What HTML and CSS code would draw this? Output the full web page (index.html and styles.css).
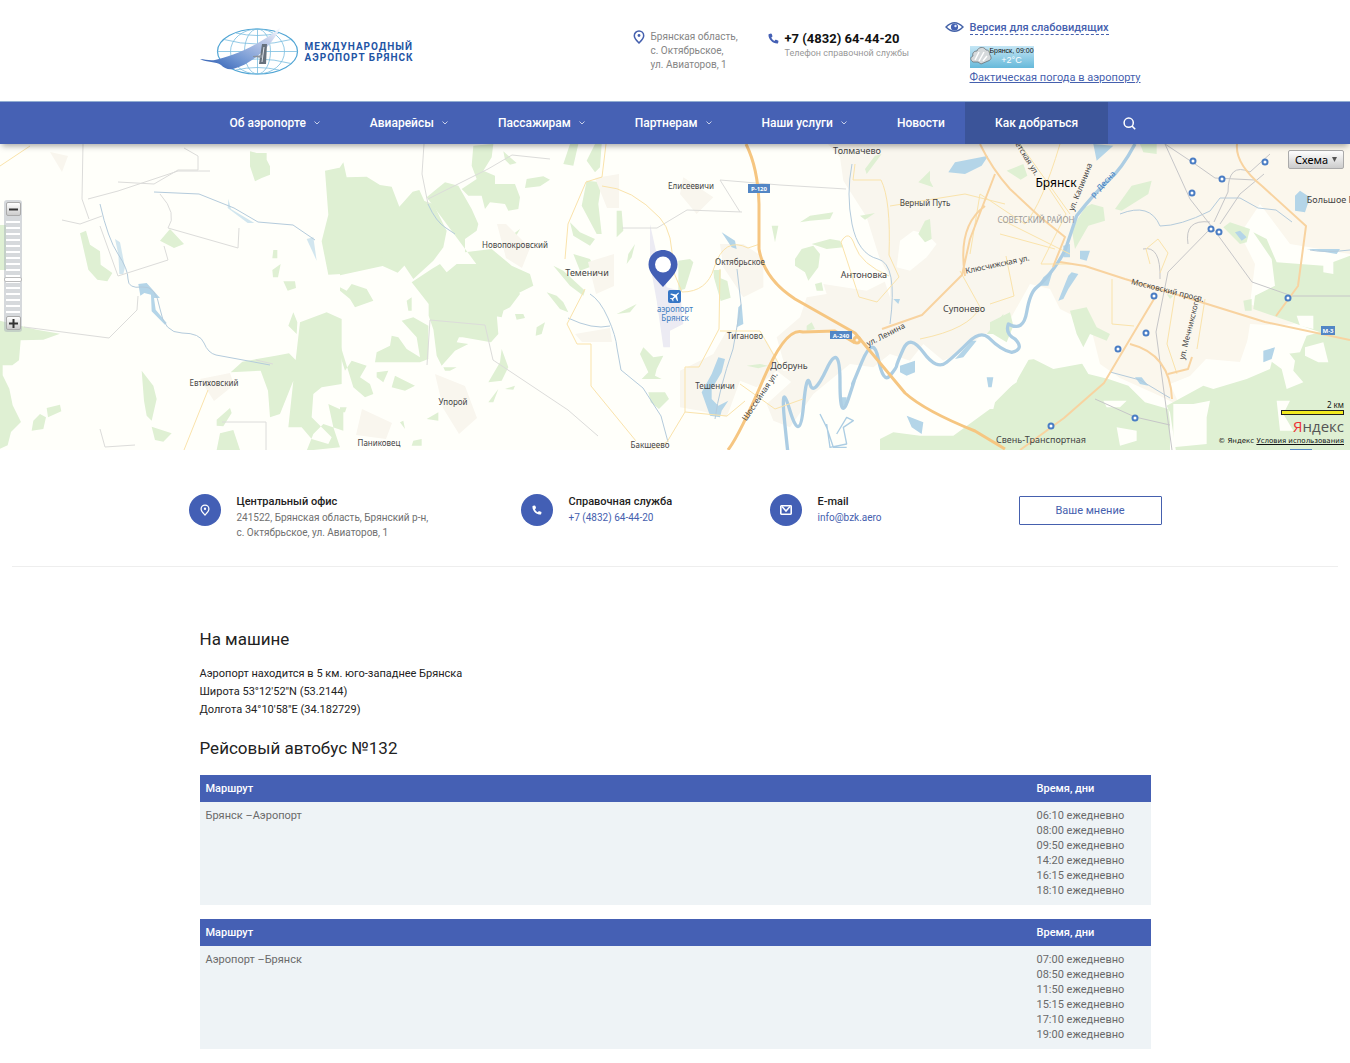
FILE: index.html
```html
<!DOCTYPE html>
<html lang="ru">
<head>
<meta charset="utf-8">
<meta name="viewport" content="width=device-width, initial-scale=1">
<title>Как добраться</title>
<link rel="stylesheet" href="styles.css">
</head>
<body>
<svg class="defs" width="0" height="0" aria-hidden="true">
  <symbol id="i-pin" viewBox="0 0 12 14"><path d="M6 1a4.7 4.7 0 0 0-4.7 4.7C1.300 8.300 3.600 10.500 6 13c2.400-2.500 4.700-4.700 4.700-7.300A4.700 4.700 0 0 0 6 1z" fill="none" stroke="currentColor" stroke-width="1.500"/><circle cx="6" cy="5.500" r="1.400" fill="currentColor"/></symbol>
  <symbol id="i-phone" viewBox="0 0 12 12"><path d="M1.400 1 3.200.5c.5 0 .7.200.9.700l.7 2c.1.500 0 .8-.4 1.100l-.9.700c.7 1.700 1.800 2.800 3.500 3.600l.8-.9c.3-.4.600-.4 1-.3l2 .8c.5.200.7.400.6.900l-.4 1.700c-.1.400-.4.700-.9.700C5 11.500.5 7 .5 2c0-.5.4-.8.900-1z" fill="currentColor"/></symbol>
  <symbol id="i-down" viewBox="0 0 6 4"><path d="m.5.500 2.500 2.500L5.500.5" fill="none" stroke="currentColor"/></symbol>
</svg>

<header class="header wrap">
  <a class="logo" href="#">
    <svg width="99" height="48" viewBox="0 0 99 48" aria-hidden="true">
      <defs><linearGradient id="wing" x1="0" y1="1" x2="1" y2="0"><stop offset="0" stop-color="#2554ad"/><stop offset=".35" stop-color="#6f95d2"/><stop offset=".75" stop-color="#c2cdea"/><stop offset="1" stop-color="#fff"/></linearGradient></defs>
      <g fill="none" stroke="#79bce0" stroke-width=".8">
        <ellipse cx="57.500" cy="23.500" rx="40" ry="22.500" stroke="#4fa4d4" stroke-width="1.200"/>
        <ellipse cx="57.500" cy="23.500" rx="27" ry="22.500"/><ellipse cx="57.500" cy="23.500" rx="13" ry="22.500"/>
        <path d="M57.500 1v45M17.500 23.500h80M24 11.500q33 9 67 0M24 35.500q33-9 67 0M36 5q21 5 43 0M36 42q21-5 43 0"/>
      </g>
      <path d="M0 31c5 0 9 2 15 1C30 29 57 19 81-1 70 20 52 36 33 41c-5 1-9-1-12-4-5-4-14-2-21-6z" fill="url(#wing)"/>
      <path d="m62 16 5 0-1 20h-7z" fill="#66717d"/><path d="m53 28 10-1-1 3-9-1z" fill="#89929d"/><path d="m64 19-2 15" stroke="#dfe3e8" stroke-width="1"/>
    </svg>
    <span class="logo-text">МЕЖДУНАРОДНЫЙ<br>АЭРОПОРТ БРЯНСК</span>
  </a>
  <address class="place"><svg class="pin" width="12" height="14"><use href="#i-pin"/></svg><span>Брянская область,<br>с. Октябрьское,<br>ул. Авиаторов, 1</span></address>
  <div class="phone"><svg width="11" height="11"><use href="#i-phone"/></svg><div><a class="number" href="tel:+74832644420">+7 (4832) 64-44-20</a><p>Телефон справочной службы</p></div></div>
  <div class="extra">
    <svg width="19" height="10" viewBox="0 0 19 10" aria-hidden="true"><path d="M1 5q8.500-8.500 17 0-8.500 8.500-17 0z" fill="#fff" stroke="#4462a8" stroke-width="1.400"/><circle cx="9.500" cy="5" r="3.600" fill="#4462b4"/><circle cx="10.500" cy="4" r="1.200" fill="#dfe8fa"/></svg>
    <div>
      <a class="vision" href="#">Версия для слабовидящих</a>
      <div class="weather">
        <svg width="22" height="20" viewBox="0 0 22 20" aria-hidden="true"><path d="M3 16c-3-2-3-5 0-6-1-3 1-5 4-5 1-4 7-5 9-1 4 0 3 3 4 5 2 3 1 5-2 6l-7 3-3-2-5 0z" fill="#d5d9db" stroke="#697277" stroke-width=".8"/><path d="m5 14 4-8M9 15l5-9m-1 9 4-5" stroke="#fff" stroke-width="1.500"/></svg>
        <span>Брянск, 09:00<b>+2°C</b></span>
      </div>
      <a class="fact" href="#">Фактическая погода в аэропорту</a>
    </div>
  </div>
</header>

<nav class="nav">
  <div class="wrap nav-in">
    <a href="#">Об аэропорте<svg width="6" height="4"><use href="#i-down"/></svg></a>
    <a href="#">Авиарейсы<svg width="6" height="4"><use href="#i-down"/></svg></a>
    <a href="#">Пассажирам<svg width="6" height="4"><use href="#i-down"/></svg></a>
    <a href="#">Партнерам<svg width="6" height="4"><use href="#i-down"/></svg></a>
    <a href="#">Наши услуги<svg width="6" height="4"><use href="#i-down"/></svg></a>
    <a href="#">Новости</a>
    <a class="active" href="#">Как добраться</a>
    <button class="search" type="button" aria-label="Поиск"><svg width="13" height="13" viewBox="0 0 13 13"><circle cx="5.700" cy="5.700" r="4.600" fill="none" stroke="#fff" stroke-width="1.500"/><path d="m9 9 3.200 3.200" stroke="#fff" stroke-width="1.600"/></svg></button>
  </div>
</nav>

<section class="map">
<svg class="map-art" viewBox="0 0 1350 306" preserveAspectRatio="xMidYMid slice">
  <rect width="1350" height="306" fill="#fffffa"/>
  <!-- eastern towns and the city -->
  <g transform="translate(640 0) scale(.33333)">
    <path class="town" d="M545 0H1090V560l-60 10-60 50-60 30-60-50-40 50-60-20-50 40-70-10-110 90-70 100-50-20-20-50 100-90-50-40-20-70 70-60 20-60 60-10-10-30 130 20 60-30-60-190-70-110-10-70-45-50zM130 100l90 60-50 50-50-60zM240 300h70l60 40 0 90-60 30-60-90zM260 560l120 30 50 90 110 0-40 70-90-70-60 50-50-20-40 110-80-20-60-10 0-110 100-50z"/>
    <path class="clear" d="M780 290l40-30 40 10 30 30-30 40-50 40-40-10zM690 290l60 110 0 60-20-60-60-80z"/>
    <path class="air" d="M30 240l20 90 30 100 40 10 10 100-40 20v50H70l-20-140-20-110z"/>
  </g>
  <path class="city" d="M1000 0H1350V110L1290 100 1260 60 1240 90 1255 120 1250 160 1295 180 1262 182 1248 195 1240 218 1206 215 1190 232 1170 240 1180 262 1160 252 1120 234 1100 220 1090 180 1060 165 1050 145 1030 140 1012 172 1000 195z"/>
  <!-- woods -->
  <g class="green">
    <g transform="scale(.33333)">
      <path d="M750 22l20 5 30 0 0 20 10 20 0 25-25 10-20 10-15-45zM975 80l50-10v320l-40 2-20-100 20-80zM240 268l18-8 12 42 30 20 2 40 35 25-15 25-30-5-27-30zM480 290l30-35 42 45-30 12zM820 318h12v25h-15zM817 378l25-18-8 40h-15zM850 412h35l3 20-25 8zM865 545l15-40 12 30-2 35zM900 535l80-30 45 20v195l-60 10-25 20-5 70 60 60-10 20-50-15-30-35h-40l15-140-40 100-30 10-6-80-22-60-90 5 35-32 100-18 40-7 20 20zM0 530l110 27 70 12-50 18-68 2-5 60-20 15H8v30l20 40 10 50 25 50-30 30-10 40-23 10zM425 680l35 45 10 40-15 65-15-15-8-45zM455 848l60 20-25 25-25-5zM140 792l40-10 4 20-40 18zM100 830l20-20 18 10-8 35-35 5zM650 845l20 2 25-40-5-15-40 35zM660 868l40-10 20 60h-70zM985 780l45 20v60l-60-20-30 30-20 50 100-10-20-60z"/>
      <path d="M0 243h18v135H0z"/>
    </g>
    <g transform="translate(340 0) scale(.33333)">
      <path d="M0 70l10-15 10 45 60-2 40 25 35 5 23 60 40-45 20-5 25 55 15 50 20 10 0 18-25 10-100 105-45-20-128 28zM260 160l30-25 25-20 40 10 40 70 20 45-5 20-35 25 0 40 80-10 60 50 55 25 10 35-80 40-15 55-25-5-30-80 5-40zM215 415l60-40 25-15 20 25 30-25 80 0 60 10 30 40 20 40-30 40-40 20 5 60-22 25-85-15-80 0-22-65 0-35zM400 5l60-5-5 40-25 40 35 15 0 25 60 0 15 40-5 35-30 5-10-20-45-5-15 20-10-40-40 0-20-20 45-30-15-40zM490 22l40 35-20 5-15-15zM560 105l50-8 20 10-30 20-45 5zM670 60l20-60h25l-15 65zM740 50l25-50h20l-5 70-15 15zM740 110l45 5-10 65 10 90-15 0-45-85zM690 235l30 30 45 20-15 20-50-30zM830 200l15 0 5 60-20 20zM700 330l50 15 10 20-40 15zM640 365l30 15 65 60-5 15-40-30zM500 285l40-30-20 35 10 10-15 10zM865 330l20-30-10 40-15 20zM620 445l30 10 20 20 15 30-25-10zM525 510h25l5 12-25 5zM590 550l25-15-10 35-18 5zM0 430l20 10 15-20 45 15 20 35-55 20-15-25-30-25zM200 470l15-10v40h-10zM185 530l35-10 45 25v100l-25 10-135 0 5-30 40-20 5-30 20 5 25 35 40 25-10-60zM280 555h15l5 20 80-45-30 65 35 5-40 20-40 45-15-30zM310 670l40 0-20 10h-15zM485 615l20 55-20 40-40 5 35-60zM0 600l40 130 35 30 25-10-10-30-30-20 20-35-45-15-20 30-25-80zM110 685l35-5-15 35-20-15zM165 695l60 30-30 15-40-10zM445 775l30-40-15 40zM495 735l30-10-5 12zM900 630l10-20 30 30 30-5-20 40-5 20 20 10-60 0 20-20zM925 745h50l12 20-30 30-25-20zM830 510l60-30-20 25zM220 890l25-5v20h-30zM180 835l10-5 5 25zM0 790h20l-5 15H0zM260 825l35-20 0 25z"/>
      <path d="M120 340l70 20 30 45 60-55 30-40 10-50-40-80-60-20-60 50z"/>
    </g>
    <g transform="translate(640 0) scale(.33333)">
      <path d="M115 350l35-5 10 10-25 80-20 5zM220 378h22v25l20 8 10 50-30 10-20-70zM395 245l20 0-10 50zM480 235l30-20 70-10-10 20-60 5zM465 345l20-30 35-10 20 25-5 40-30 40-10-25-30-20zM515 300l55-15 30 5 10 20-50 5zM660 215l45-8-30 20zM675 75l30-40 20-5-45 60zM835 115l35-35 0 30 10 20zM835 270l20-40 15-5 5 60-20 10zM500 545l15-10 10 20-25 5zM320 665l40-5 25 5-30 8zM720 885l40-20 80 10 100 0 110-80 40 0v130H720zM1040 570l50-60v60zM525 420l20-5 5 25-20 0z"/>
    </g>
    <g transform="translate(990 0) scale(.33333)">
      <path d="M375 195l50-70 60-15-10 40-80 50zM285 190l20-10 35 10 5 40-50 15-40 70-10-60zM50 80l50-20 12 35-20 12zM450 0h50v30l-40-5zM700 250l20-15 60 20-10 40-20 5zM790 265l40 20 30 70 140 10 80-30v600H560l-20-130-10-20 110-60 30 10 100-30 70-30 10-40 80-10 20-50 40-10-70-25-130-45 5-40 60-30-10-80zM0 535l60-30 10 40-20 50-50-30zM95 650l40-5 60 25 70-30 30 50 60 15 60 20 50 50 70 20 5 40 0 90H0v-90l20-80 60-40zM240 500l50-10 30 60 40 20-10 20-50-20-20 40-20-40z"/>
      <path d="M760 470l25-5v35h-20zM530 450l20 5-10 10z"/>
    </g>
  </g>
  <g class="clear" transform="translate(990 0) scale(.33333)">
    <path d="M0 590l60 20 40-20 15-60 60-55 50 40-5 50 30 40 50 50-110 20-70-35-40 70-80 80zM780 540l80 5 20 60 35 45-5 30 30 35-50 20-15-60-55-40-45 30-5-60zM945 610l55-15 15 60-30 0-40-20zM1000 350l30-15v55l-30-5zM920 515l50 0 0 40-40-10zM380 850l60 10 0 30-50 15zM860 770l40 0-20 40 30 50-40 0zM550 780l60 0 50-10-10 50 0 80-100 10zM340 770l70 0-20 20-40 0zM640 700l80-50-60 60z"/>
  </g>
  <!-- settlements in the west -->
  <path class="town" d="M50 8l18 4-6 16zM200 235l30-6 4 12-20 16zM435 230l30 12 12 32-18 16-16-26zM497 80h9l24 24-8 20-16-10zM595 34l24-4v34h-12zM588 118l26-8v32l-18 8zM575 190l35-6 2 14h-30zM362 265l30 14-6 16-30-4z"/>
  <!-- water -->
  <g class="water">
    <g transform="scale(.33333)"><path d="M415 420l25-3 40 45-18 0 5 35 33 40-5 5-40-40-2-50-20-5-12 8z"/><path opacity=".6" d="M345 285l15 10 15 75-5 20-12 0-3-60zM685 165l8 30 70 42-20 0-60-45zM920 285l20-5 10 70z"/></g>
    <g transform="translate(640 0) scale(.33333)"><path d="M235 640l20 5-10 40-30 50 0 30 20 20 30-15-20 30-5 20-30-5-25-70 30-55zM295 490l10-10 5 60-20 10zM245 265l40 25 5 25-15-5zM780 665l45-15 0 35-25 10-20-10zM945 645l50-55 15 0-40 50zM600 760h20l0 20-15 10zM800 815l50 20-5 35-30-20zM1040 700h20l-5 30h-10zM760 465l20 0-5 15zM925 85l20-30 100-20-20 30-50 25z"/></g>
    <g transform="translate(990 0) scale(.33333)"><path d="M310 0l60 5-50 45zM915 155l15-15 30 20-15 45-30-5zM735 265l15-5 20 20-15 10zM270 320l30 0-10 30-20-5zM235 395l10-10 20 5-30 45-15 30-15 5 10-25zM435 700l20 0 20 25-25-5zM820 620l35-10-10 35-25 10zM950 315l100 0-10 15zM160 400l30-25-15 50-30 0zM220 305l20-5 0 40-20 0z"/></g>
  </g>
  <g class="river">
    <g class="wide" transform="translate(640 0) scale(.33333)">
      <path d="M1485 0q-40 75-80 110t-95 105q-20 60-30 90t-40 70-50 55-30 75-55 35q-10 30 20 45 30 30-10 40-30-5-70-45-25-20-60 15t-65 60-70-30-60-10-20 50-20 30-35-50-50 10-25 60-15 50-25-50-40-40-50 45-20 70-40 10-15 45 10 75"/>
      <path class="thin" d="M560 840l10 70 50-10-10-50 30-20-20-10-30 50M540 810l20 40 20 60 40 0"/>
    </g>
    <path d="M100 60q8 35 18 50t10 25 14 8 18 22 22 24 22 10 12 12l54 10M154 48l45 2 35 14 24 14 35 3 22 15M428 60q8 18 18 24l9 6M568 174q25 12 42 8M590 150q10 6 18 24t9 30l4 22 22 18 18 28 7 26M852 20q-6 30 0 60t26 35 12 65M737 125l4 35-8 45q-14 40-18 70M1120 70q30-12 40 12 20 0 50-15l10-13 20 0 18 10 18 2 16 12M1110 228l30 8 30 18M1310 106q15 3 40 0"/>
  </g>
  <!-- railways and field tracks -->
  <g class="track">
    <path d="M184 4l14 8v14l-20 0-24 14-36-2M62 76l18 4 22-8M160 50q18 20 8 34l70 20 1-20M100 82l18 50 50-16-4-14M24 183l85 11 28-28 1-14M222 278l44 0 0 28M83 0l-1 55 7 20M100 285l5 18 30-2M256 216l17 4M88 55l30-8 60-20 32 0M430 176l55 5 8 35 75 50 30 26M430 176l-3 45M622 84h35l30-18 55 2M740 68l-20-32 60 5 66 4M424 0l-2 30 6 30M428 55l60-30 24-14 38 4"/>
    <path class="rail" d="M1165 0l25 55 22 28 40 55 40 14h58M1212 83l-44 45-12 60 8 60 8 58M1214 78l14-30q0-30 22-20l20-18M1165 0l30 20 20 14 40 2M1220 80l20-30 24-20M1188 100q-4-25 22-22M1095 255l40 18 35 8M1143 105q18-4 17 30"/>
  </g>
  <!-- roads -->
  <g class="road">
    <path class="minor" d="M606 0l-4 33-16 5-18 42-3 35M602 42q30 2 58 32 14 15 12 50l10 24q25 0 32-24 10-32 34-20l12-4M585 145l-18 35 10 20h14v30l0 12 45 55M855 20l-2 16 28 0q10 20 8 75l10 22-22 25-18-5-18-55q8-14 14 4t34 30M720 125l-1 60-20 38-14 0v45l-18 30-17 8M780 222l-20-35-40 0M685 268l42 4 18-15M745 165l0 0M740 240l35 25 28-10M184 306l24-60M1112 135l0 45 22 2M1150 120l-4-15 12-10 10 14-8 20M1175 150l-8 50 10 30M1205 155l-8 50M890 62l75-12 40 10M1060 0q-18 60-35 80l-45-30-10 60M1020 0l50 70M1000 90l55 15M1000 75l70 35M1046 40l20 30-25 50 30 0M0 22L30 2M920 195q50-10 60-32l-20-36M990 160l24-8-8-40"/>
    <path class="mid" d="M980 0q12 25 30 45l30 28 25 20-12 30M995 30l-25 65-8 36-40 40-40 14M1237 0q-2 20 25 42l44 40-8 60-22 30M1060 118l25 4 40 13 50 15 90 28 85 18M965 132q-8-50 20-70M1154 155q-30 50-50 84l-40 35-44 32M1130 200q40 10 42 55M1168 230l20-5 4-12"/>
    <path class="main" d="M746 0q12 24 13 60v45q5 30 36 50l60 34 50 60q20 18 70 38l30 18M728 306q12-16 35-70t40-48l32-1 20 12"/>
    <circle cx="857" cy="196" r="3"/>
  </g>
  <!-- road numbers -->
  <g class="shield"><rect x="748" y="40" width="22" height="9"/><rect x="830" y="187" width="22" height="8"/><rect x="1321" y="182" width="14" height="9"/><rect x="1290" y="305" width="22" height="2"/>
    <text x="759" y="47">Р-120</text><text x="841" y="194">А-240</text><text x="1328" y="189">М-3</text></g>
  <!-- stations -->
  <g class="station"><circle cx="1193" cy="17" r="2.500"/><circle cx="1265" cy="18" r="2.500"/><circle cx="1222" cy="35" r="2.500"/><circle cx="1192" cy="49" r="2.500"/><circle cx="1211" cy="85" r="2.500"/><circle cx="1219" cy="88" r="2.500"/><circle cx="1154" cy="152" r="2.500"/><circle cx="1288" cy="154" r="2.500"/><circle cx="1146" cy="189" r="2.500"/><circle cx="1118" cy="205" r="2.500"/><circle cx="1135" cy="274" r="2.500"/><circle cx="1051" cy="282" r="2.500"/></g>
  <!-- place names -->
  <g class="names">
    <text x="691" y="45">Елисеевичи</text><text x="515" y="104">Новопокровский</text><text x="214" y="242">Евтиховский</text><text x="379" y="302">Паниковец</text><text x="453" y="261">Упорой</text><text x="650" y="304">Бакшеево</text><text x="740" y="121">Октябрьское</text><text x="745" y="195">Тиганово</text><text x="715" y="245">Тешеничи</text><text x="925" y="62">Верный Путь</text>
    <g class="mid-name"><text x="587" y="132">Теменичи</text><text x="857" y="10">Толмачево</text><text x="864" y="134">Антоновка</text><text x="964" y="168">Супонево</text><text x="789" y="225">Добрунь</text><text x="1041" y="299">Свень-Транспортная</text><text x="1331" y="59">Большое П</text></g>
    <text class="city-name" x="1056" y="43">Брянск</text><text class="area" x="1036" y="79">СОВЕТСКИЙ РАЙОН</text>
    <text transform="translate(887 193) rotate(-27)">ул. Ленина</text><text transform="translate(762 254) rotate(-56)">Шоссейная ул.</text><text transform="translate(998 123) rotate(-12)">Клюсчижская ул.</text><text transform="translate(1167 149) rotate(14)">Московский просп.</text><text transform="translate(1192 185) rotate(-76)">ул. Мечникского</text><text transform="translate(1083 44) rotate(-68)">ул. Калинина</text><text transform="translate(1025 16) rotate(58)">етская ул.</text><text class="blue" transform="translate(1105 42) rotate(-47)">р. Десна</text>
    <text class="blue" x="675" y="168">аэропорт</text><text class="blue" x="675" y="177">Брянск</text>
  </g>
  <rect x="668" y="146" width="13" height="13" rx="2" fill="#3676c6"/>
  <path d="m678.500 148.500-2.500 2-5-1-.8.800 4 2-2 2-1.700-.3-.6.600 2 1 1 2 .6-.6-.3-1.700 2-2 2 4 .8-.8-1-5 2-2.300z" fill="#fff"/>
  <path fill-rule="evenodd" d="M663 106c-8 0-14.500 6-14.500 14.500 0 8 7 14 14.500 22.500 7.500-8.500 14.500-14.500 14.500-22.500C677.500 112 671 106 663 106z" fill="#435fb5"/><circle cx="663" cy="120.500" r="8" fill="#fff"/>
</svg>
  <div class="zoom">
    <button type="button" aria-label="Уменьшить"><svg width="9" height="9"><path d="M0 4.500h9" stroke="#333" stroke-width="2"/></svg></button>
    <input type="range" min="0" max="17" value="11" aria-label="Масштаб">
    <button type="button" aria-label="Увеличить"><svg width="9" height="9"><path d="M0 4.500h9M4.500 0v9" stroke="#333" stroke-width="2"/></svg></button>
  </div>
  <button class="scheme" type="button">Схема<svg width="5" height="5"><path d="M0 0h5L2.500 5z" fill="#555"/></svg></button>
  <div class="credit">
    <span class="scale">2 км</span>
    <span class="brand"><i>Я</i>ндекс</span>
    <span class="terms">© Яндекс <a href="#">Условия использования</a></span>
  </div>
</section>

<section class="contacts">
  <div class="contacts-in">
    <div class="contact"><span class="round"><svg width="10" height="12"><use href="#i-pin"/></svg></span><div><h3>Центральный офис</h3><p>241522, Брянская область, Брянский р-н,<br>с. Октябрьское, ул. Авиаторов, 1</p></div></div>
    <div class="contact"><span class="round"><svg width="10" height="10"><use href="#i-phone"/></svg></span><div><h3>Справочная служба</h3><a href="tel:+74832644420">+7 (4832) 64-44-20</a></div></div>
    <div class="contact"><span class="round"><svg width="12" height="10" viewBox="0 0 12 10"><rect x=".8" y=".8" width="10.400" height="8.400" rx=".6" fill="none" stroke="#fff" stroke-width="1.600"/><path d="M2 1.500 6 6l4-4.500" fill="none" stroke="#fff" stroke-width="1.500"/></svg></span><div><h3>E-mail</h3><a href="mailto:info@bzk.aero">info@bzk.aero</a></div></div>
    <button class="opinion" type="button">Ваше мнение</button>
  </div>
</section>

<main class="wrap content">
  <h2>На машине</h2>
  <p>Аэропорт находится в 5 км. юго-западнее Брянска<br>Широта 53°12'52"N (53.2144)<br>Долгота 34°10'58"E (34.182729)</p>
  <h2>Рейсовый автобус №132</h2>
  <table>
    <thead><tr><th>Маршрут</th><th class="time">Время, дни</th></tr></thead>
    <tbody><tr><td>Брянск –Аэропорт</td><td>06:10 ежедневно<br>08:00 ежедневно<br>09:50 ежедневно<br>14:20 ежедневно<br>16:15 ежедневно<br>18:10 ежедневно</td></tr></tbody>
  </table>
  <table>
    <thead><tr><th>Маршрут</th><th class="time">Время, дни</th></tr></thead>
    <tbody><tr><td>Аэропорт –Брянск</td><td>07:00 ежедневно<br>08:50 ежедневно<br>11:50 ежедневно<br>15:15 ежедневно<br>17:10 ежедневно<br>19:00 ежедневно</td></tr></tbody>
  </table>
</main>
</body>
</html>
```
FILE: styles.css
```css
* { box-sizing: border-box; }
body { margin: 0; background: #fff; color: #222; font: 11px/15px Roboto, "Liberation Sans", sans-serif; }
h2, h3, p { margin: 0; font-weight: 400; }
a { color: #4560ae; text-decoration: none; }
button { font: inherit; padding: 0; cursor: pointer; }
svg { flex: none; }
.defs { position: absolute; }
.wrap { max-width: 951px; margin: 0 auto; }

/* header */
.header { display: grid; grid-template-columns: 433px 135px 177px 1fr; padding: 20px 0 17px; height: 101px; }
.logo { display: flex; gap: 6px; align-items: center; align-self: start; margin-top: 8px; }
.logo-text { font: 700 10px/11px Roboto, sans-serif; letter-spacing: 1px; color: #1f55a5; }
.place { display: flex; gap: 6px; margin-top: 10px; font-size: 10px; font-style: normal; line-height: 14px; color: #858585; }
.place svg { color: #4560ae; }
.phone { display: flex; gap: 6px; margin-top: 10px; }
.phone > svg { margin-top: 3px; color: #4560b4; }
.number { display: block; font-size: 13px; line-height: 17px; font-weight: 700; color: #111; }
.phone p { font-size: 9px; line-height: 13px; color: #999; white-space: nowrap; }
.extra { display: flex; gap: 6px; white-space: nowrap; }
.extra > svg { margin-top: 2px; }
.vision { display: inline-block; line-height: 13px; font-weight: 500; border-bottom: 1px dashed #4560ae; }
.weather { display: flex; width: 64px; height: 22px; margin: 11px 0 3px; overflow: hidden; background: linear-gradient(#c5e6f5, #66b9da); }
.weather span { margin-left: -2px; padding-top: 1px; font: 7px/8px "Liberation Sans", Arial, sans-serif; color: #111; text-align: center; }
.weather b { display: block; font-size: 9px; line-height: 10px; color: #fff; font-weight: 400; }
.fact { display: block; line-height: 14px; text-decoration: underline; }

/* navigation */
.nav { position: relative; z-index: 1; background: #4661b4; border-top: 1px solid #93aed2; box-shadow: 0 4px 6px -2px rgba(0, 0, 0, .35); }
.nav-in { display: flex; height: 42px; }
.nav a { display: flex; align-items: center; gap: 8px; padding: 0 20px 0 30px; font-size: 12px; font-weight: 500; color: #fff; white-space: nowrap; }
.nav a svg { opacity: .7; }
.nav .active { padding: 0 30px; background: #3b5499; }
.search { display: flex; align-items: center; padding: 0 15px; background: none; border: 0; }

/* map */
.map { position: relative; height: 306px; overflow: hidden; }
.map-art { display: block; width: 100%; height: 100%; }
.green { fill: #dff0d3; }
.town { fill: #f9f6ee; }
.city { fill: #fbf7ed; }
.clear { fill: #fffffa; }
.air { fill: #ecebf3; }
.water { fill: #b4d5e8; }
.river { fill: none; stroke: #b4cbdc; stroke-width: 1; }
.river .wide { stroke: #accde3; stroke-width: 10; stroke-linejoin: round; }
.river .thin { stroke-width: 4; }
.track { fill: none; stroke: #dcdcda; stroke-width: 1; }
.rail { stroke: #c6c6c8; }
.road { fill: none; stroke-linejoin: round; }
.minor { stroke: #fae3ab; stroke-width: 1; }
.mid { stroke: #f8d3a0; stroke-width: 2; }
.main, .road circle { stroke: #f6c681; stroke-width: 3; }
.shield { fill: #5286c5; }
.shield text { fill: #fff; font: 700 6px "Noto Sans", sans-serif; text-anchor: middle; }
.station { fill: #fff; stroke: #4a7dc4; stroke-width: 2; }
.names { fill: #444; font: 8px "Noto Sans", sans-serif; text-anchor: middle; }
.mid-name { font-size: 9px; }
.city-name { font-size: 12px; fill: #000; }
.area { fill: #999; }
.names .blue { fill: #3c7cc0; }
.zoom { position: absolute; top: 56px; left: 4px; display: flex; flex-direction: column; align-items: center; gap: 1px; width: 18px; padding: 2px 0; border-radius: 3px; background: rgba(165, 170, 185, .45); }
.zoom button { display: grid; place-items: center; width: 15px; height: 14px; border: 1px solid #aaa; border-radius: 2px; background: linear-gradient(#fff, #ccc); }
.zoom input { appearance: none; writing-mode: vertical-lr; width: 14px; height: 98px; margin: 0; background: repeating-linear-gradient(transparent 0 4px, #fff 4px 6px); }
.zoom input::-webkit-slider-thumb { appearance: none; width: 18px; height: 5px; border: 1px solid #bbb; border-radius: 2px; background: #fff; }
.scheme { position: absolute; top: 6px; right: 6px; display: flex; align-items: center; justify-content: center; gap: 4px; width: 56px; height: 19px; border: 1px solid #aaa; border-radius: 2px; background: linear-gradient(#fff, #ccc); font: 11px "Noto Sans", sans-serif; color: #000; }
.credit { position: absolute; right: 6px; bottom: 5px; display: flex; flex-direction: column; align-items: flex-end; font: 8px/11px "Noto Sans", sans-serif; color: #111; }
.scale { width: 63px; text-align: right; }
.scale::after { content: ""; display: block; height: 3px; border: 1px solid #222; background: #f2ea20; }
.brand { font: 15px/22px "Liberation Sans Narrow", "Open Sans", sans-serif; color: #555; }
.brand i { font-style: normal; color: #e33; }
.terms { font: 7px/8px "DejaVu Sans", sans-serif; }
.terms a { color: #111; text-decoration: underline; }

/* contacts */
.contacts { margin: 0 12px; padding: 44px 0 25px; border-bottom: 1px solid #eee; }
.contacts-in { display: grid; grid-template-columns: 332px 249px 249px 143px; max-width: 973px; margin: 0 auto; align-items: start; }
.contact { display: flex; gap: 16px; font-size: 10px; color: #707070; }
.contact h3 { font-size: 11px; line-height: 16px; font-weight: 500; color: #222; }
.contact > div { padding-bottom: 1px; }
.round { display: grid; flex: none; place-items: center; width: 32px; height: 32px; border-radius: 50%; background: #435fb5; color: #fff; }
.opinion { height: 29px; margin-top: 2px; border: 1px solid #4560ae; border-radius: 1px; background: #fff; color: #4560ae; }

/* directions and timetable */
.content { padding: 60px 0 14px; }
.content h2 { font-size: 17px; line-height: 24px; }
.content p { margin: 14px 0 17px; line-height: 18px; }
table { width: 100%; margin-top: 15px; border-collapse: collapse; background: #eef3f6; color: #6a6a6a; }
table + table { margin-top: 14px; }
th { padding: 6px; background: #4560b4; color: #fff; font-weight: 500; text-align: left; }
td { padding: 6px 6px 7px; vertical-align: top; }
.time { width: 120px; }
```
